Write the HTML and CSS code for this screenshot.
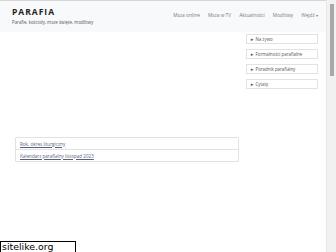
FILE: index.html
```html
<!DOCTYPE html>
<html lang="pl">
<head>
    <meta charset="UTF-8">
    <meta name="viewport" content="width=device-width, initial-scale=1.0">
    <title>Parafia</title>
    <link rel="stylesheet" href="styles.css">
</head>
<body>
    <div class="window">
        <div class="page">
            <header class="topbar">
                <div class="brand">
                    <div class="brand-name">PARAFIA</div>
                    <div class="brand-tagline">Parafie, kościoły, msze święte, modlitwy</div>
                </div>
                <nav class="nav">
                    <a href="#">Msza online</a>
                    <a href="#">Msza w TV</a>
                    <a href="#">Aktualności</a>
                    <a href="#">Modlitwy</a>
                    <a href="#">Wejdź <span class="caret">▾</span></a>
                </nav>
            </header>
            <main class="content">
                <section class="main-col">
                    <ul class="link-list">
                        <li><a href="#">Rok, okres liturgiczny</a></li>
                        <li><a href="#">Kalendarz parafialny listopad 2023</a></li>
                    </ul>
                </section>
                <aside class="side">
                    <div class="side-box">► Na żywo</div>
                    <div class="side-box">► Formalności parafialne</div>
                    <div class="side-box">► Poradnik parafialny</div>
                    <div class="side-box">► Cytaty</div>
                </aside>
            </main>
        </div>
        <div class="scrollbar"><div class="thumb"></div></div>
    </div>
    <div class="watermark">sitelike.org</div>
</body>
</html>
```

FILE: styles.css
```css
body {
    margin: 0;
    padding: 0;
    font-family: "Open Sans", Arial, sans-serif;
    background-color: #fff;
    width: 336px;
    height: 252px;
    overflow: hidden;
}
.window {
    display: flex;
    height: 252px;
}
.page {
    flex: 1;
    border-top: 1px solid #d6d6d6;
}
.topbar {
    display: flex;
    justify-content: space-between;
    align-items: flex-start;
    background-color: #f8f9fa;
    height: 31px;
    padding: 0 8px 0 12px;
}
.brand-name {
    margin-top: 6px;
    font-size: 8.5px;
    font-weight: bold;
    letter-spacing: 1px;
    color: #222;
    line-height: 10px;
}
.brand-tagline {
    margin-top: 2px;
    font-size: 4.4px;
    color: #555;
    line-height: 6px;
}
.nav {
    display: flex;
    gap: 8px;
    margin-top: 11px;
}
.nav a {
    font-size: 4.8px;
    color: #7a7a7a;
    text-decoration: none;
    line-height: 6px;
}
.caret {
    font-size: 4px;
}
.content {
    display: flex;
    gap: 7px;
    padding: 2px 8px 0 15px;
}
.main-col {
    flex: 1;
    padding-top: 103px;
}
.link-list {
    list-style: none;
    margin: 0;
    padding: 0;
    border: 1px solid #e2e2e2;
    border-radius: 1px;
}
.link-list li {
    height: 11px;
    padding: 0 4px;
    display: flex;
    align-items: center;
}
.link-list li + li {
    border-top: 1px solid #e2e2e2;
}
.link-list a {
    font-size: 4.6px;
    color: #5a5f7a;
    text-decoration: underline;
}
.side {
    width: 72px;
    display: flex;
    flex-direction: column;
    gap: 5px;
}
.side-box {
    height: 10px;
    border: 1px solid #e2e2e2;
    box-sizing: border-box;
    padding-left: 3px;
    font-size: 4.4px;
    line-height: 8px;
    color: #555;
}
.scrollbar {
    width: 10px;
    background-color: #f1f1f1;
    border-left: 1px solid #e8e8e8;
    box-sizing: border-box;
    padding: 4px 2px 0 3px;
}
.thumb {
    height: 72px;
    background-color: #a8a8a8;
}
.watermark {
    position: absolute;
    left: 0;
    top: 241px;
    width: 76px;
    height: 11px;
    box-sizing: border-box;
    border: 1px solid #000;
    border-bottom: none;
    background-color: #fff;
    font-family: "DejaVu Sans", Verdana, sans-serif;
    font-size: 9.4px;
    line-height: 10px;
    padding-left: 1px;
    color: #000;
}
```
